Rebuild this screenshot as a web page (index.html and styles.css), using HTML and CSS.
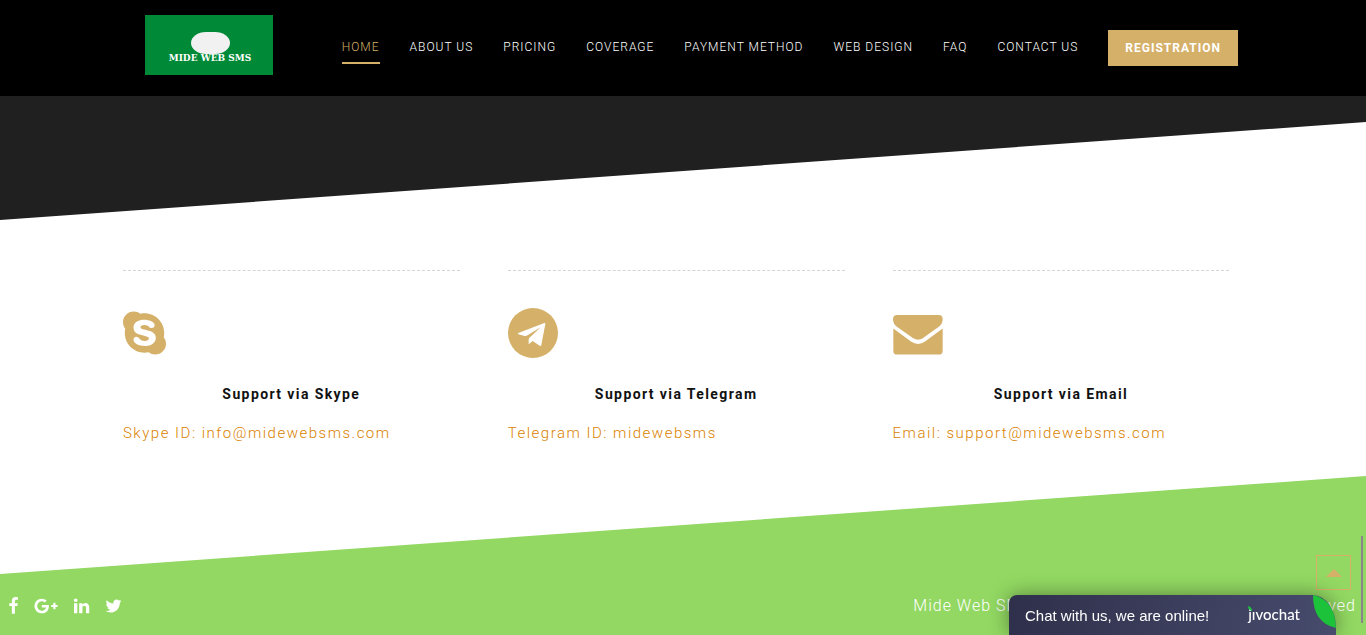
FILE: index.html
```html
<!DOCTYPE html>
<html lang="en">
<head>
<meta charset="utf-8">
<meta name="viewport" content="width=device-width, initial-scale=1">
<title>Mide Web SMS</title>
<link rel="stylesheet" href="styles.css">
</head>
<body>
<header class="header">
  <div class="header-inner">
    <a class="logo" href="#" aria-label="Mide Web SMS home">
      <span class="logo-mark"></span>
      <span class="logo-text">MIDE WEB SMS</span>
    </a>
    <nav class="nav">
      <a class="nav-link active" href="#">HOME</a>
      <a class="nav-link" href="#">ABOUT US</a>
      <a class="nav-link" href="#">PRICING</a>
      <a class="nav-link" href="#">COVERAGE</a>
      <a class="nav-link" href="#">PAYMENT METHOD</a>
      <a class="nav-link" href="#">WEB DESIGN</a>
      <a class="nav-link" href="#">FAQ</a>
      <a class="nav-link" href="#">CONTACT US</a>
      <a class="register" href="#">REGISTRATION</a>
    </nav>
  </div>
</header>
<main>
  <div class="slant-dark"></div>
  <section class="support">
    <article class="card">
      <div class="card-icon">
        <svg width="43" height="50" viewBox="0 0 448 512" aria-hidden="true"><path d="M424.700 299.800c2.900-14 4.700-28.900 4.700-43.800 0-113.500-91.900-205.300-205.300-205.300-14.900 0-29.700 1.700-43.800 4.700C161.300 40.700 137.700 32 112 32 50.200 32 0 82.200 0 144c0 25.700 8.700 49.300 23.300 68.200-2.900 14-4.700 28.900-4.700 43.800 0 113.500 91.900 205.300 205.300 205.300 14.900 0 29.700-1.700 43.800-4.700 19 14.600 42.600 23.300 68.200 23.300 61.800 0 112-50.200 112-112 .1-25.600-8.600-49.200-23.200-68.100zm-194.600 91.500c-65.600 0-120.500-29.200-120.500-65 0-16 9-30.600 29.500-30.600 31.200 0 34.100 44.900 88.100 44.900 25.700 0 42.300-11.400 42.300-26.300 0-18.700-16-21.600-42-28-62.500-15.400-117.800-22-117.800-87.200 0-59.200 58.600-81.100 109.100-81.100 55.100 0 110.800 21.900 110.800 55.400 0 16.900-11.400 31.800-30.300 31.800-28.300 0-29.200-33.500-75-33.500-25.700 0-42 7-42 22.500 0 19.800 20.800 21.800 69.100 33 41.400 9.300 90.700 26.800 90.700 77.600 0 59.100-57.100 86.500-112 86.500z"/></svg>
      </div>
      <h4 class="card-title">Support via Skype</h4>
      <p class="card-text">Skype ID: info@midewebsms.com</p>
    </article>
    <article class="card">
      <div class="card-icon">
        <svg width="50" height="50" viewBox="0 0 150 150" aria-hidden="true"><circle cx="75" cy="75" r="75"/><path class="cut" d="M109 45L31 75Q28 77 31 79L50 84Q53 85 56 83L98 58L66 88Q62 91 62 95V109L74 99L95 113Q99 115 100 111L112 48Q112 44 109 45Z"/></svg>
      </div>
      <h4 class="card-title">Support via Telegram</h4>
      <p class="card-text">Telegram ID: midewebsms</p>
    </article>
    <article class="card">
      <div class="card-icon">
        <svg width="50" height="50" viewBox="0 0 153 150" aria-hidden="true"><path d="M13 20H140Q152 20 152 33Q152 47 140 56L91 91Q77 100 62 91L12 56Q0 47 0 33Q0 20 13 20ZM1 61L55 101Q77 116 98 101L152 61V129Q152 141 140 141H13Q1 141 1 129Z"/></svg>
      </div>
      <h4 class="card-title">Support via Email</h4>
      <p class="card-text">Email: support@midewebsms.com</p>
    </article>
  </section>
</main>
<footer class="footer">
  <div class="social">
    <a href="#" aria-label="Facebook"><svg width="11" height="18" viewBox="350 0 1100 1792"><path d="M1343 12v264h-157q-86 0-116 36t-30 108v189h293l-39 296h-254v759h-306v-759h-255v-296h255v-218q0-186 104-288.500t277-102.500q147 0 228 12z"/></svg></a>
    <a href="#" aria-label="Google Plus"><svg width="24" height="18" viewBox="0 0 2304 1792"><path d="M1437 913q0 208-87 370.500t-248 254-369 91.500q-149 0-285-58t-234-156-156-234-58-285 58-285 156-234 234-156 285-58q286 0 491 192l-199 191q-117-113-292-113-123 0-227.500 62t-165.500 168.500-61 232.500 61 232.500 165.500 168.500 227.500 62q83 0 152.500-23t114.500-57.500 78.500-78.500 49-83 21.500-74h-416v-252h692q12 63 12 122zm867-122v210h-209v209h-210v-209h-209v-210h209v-209h210v209h209z"/></svg></a>
    <a href="#" aria-label="LinkedIn"><svg width="17" height="18" viewBox="60 0 1664 1792"><path d="M477 625v991h-330v-991h330zm21-306q1 73-50.500 122t-135.500 49h-2q-82 0-132-49t-50-122q0-74 51.500-122.500t134.500-48.500 133 48.500 51 122.500zm1166 729v568h-329v-530q0-105-40.500-164.500t-126.500-59.500q-63 0-105.500 34.500t-63.500 85.500q-11 30-11 81v553h-329q2-399 2-647t-1-296l-1-48h329v144h-2q20-32 41-56t56.500-52 87-43.500 114.500-15.500q171 0 275 113.500t104 332.500z"/></svg></a>
    <a href="#" aria-label="Twitter"><svg width="17" height="18" viewBox="64 0 1664 1792"><path d="M1684 408q-67 98-162 167 1 14 1 42 0 130-38 259.500t-115.500 248.500-184.500 210.500-258 146-323 54.500q-271 0-496-145 35 4 78 4 225 0 401-138-105-2-188-64.500t-114-159.500q33 5 61 5 43 0 85-11-112-23-185.500-111.500t-73.500-205.500v-4q68 38 146 41-66-44-105-115t-39-154q0-88 44-163 121 149 294.500 238.500t371.500 99.500q-8-38-8-74 0-134 94.500-228.500t228.500-94.500q140 0 236 102 109-21 205-78-37 115-142 178 93-10 186-50z"/></svg></a>
  </div>
  <p class="copyright">Mide Web SMS - Copyright © 2019 - All Rights Reserved</p>
</footer>
<a class="to-top" href="#" aria-label="Back to top"></a>
<div class="scroll-thumb"></div>
<button class="chat" type="button">
  <span>Chat with us, we are online!</span>
  <span class="chat-brand">jıvochat<svg class="brand-leaf" width="4" height="5" viewBox="0 0 4 5"><path d="M0 0Q4 1 4 5Q0 4 0 0Z"/></svg></span>
  <svg class="chat-leaf" width="23" height="33" viewBox="0 0 23 33" aria-hidden="true"><path d="M0 0Q22 5 23 33Q0 28 0 0Z"/></svg>
</button>
</body>
</html>
```
FILE: styles.css
```css
* { box-sizing: border-box; }
body {
  margin: 0;
  min-height: 100vh;
  display: flex;
  flex-direction: column;
  background: #fff;
  font-family: Roboto, "Liberation Sans", sans-serif;
  letter-spacing: 1px;
  overflow-x: hidden;
}
a { color: inherit; text-decoration: none; }

.header { background: #000; }
.header-inner {
  max-width: 1110px;
  height: 96px;
  margin: 0 auto;
  padding: 15px 0 0 17px;
  display: flex;
  justify-content: space-between;
  align-items: flex-start;
}
.logo {
  width: 128px;
  height: 60px;
  padding: 17px 0 0 2px;
  display: flex;
  flex-direction: column;
  align-items: center;
  background: #008a37;
}
.logo-mark {
  width: 39px;
  height: 22px;
  flex: none;
  border-radius: 15px / 11px;
  background: #f1f1f1;
}
.logo-text {
  color: #fff;
  font: bold 9px/8px "DejaVu Serif", serif;
  letter-spacing: 0;
  white-space: nowrap;
}
.nav {
  padding-top: 15px;
  display: flex;
  gap: 30px;
  color: #fff;
  font-size: 12px;
  font-weight: 300;
  line-height: 34px;
  white-space: nowrap;
}
.nav-link { height: 34px; }
.active { color: #d5b069; border-bottom: 2px solid #d5b069; }
.register {
  height: 36px;
  padding: 0 17px;
  line-height: 36px;
  font-weight: 700;
  background: #d5b069;
}

.slant-dark {
  height: 124px;
  background: #202020;
  clip-path: polygon(0 0, 100% 0, 100% 26px, 0 100%);
}
.support {
  padding: 50px 10vw 30px 9vw;
  display: grid;
  grid-template-columns: repeat(3, 1fr);
  gap: 48px;
}
.card { border-top: 1px dashed #d4d4d4; padding-top: 37px; }
.card-icon { height: 50px; }
.card-icon svg { display: block; fill: #d5b069; }
.card-icon .cut { fill: #fff; }
.card-title,
.card-text { letter-spacing: 0.1em; }
.card-title {
  margin: 24px 0 0;
  color: #111;
  font-size: 14px;
  font-weight: 700;
  line-height: 24px;
  text-align: center;
}
.card-text {
  margin: 14px 0 0;
  color: #d98200;
  font-size: 15px;
  font-weight: 300;
  line-height: 26px;
}

.footer {
  flex: 1 0 auto;
  padding: 116px 10px 16px 8px;
  display: flex;
  justify-content: space-between;
  align-items: flex-start;
  background: #92d862;
  clip-path: polygon(0 98px, 100% 0, 100% 100%, 0 100%);
}
.social { display: flex; gap: 15px; padding-top: 5px; }
.social svg { display: block; fill: #fff; }
.copyright {
  margin: 0;
  color: #fff;
  font-size: 16px;
  font-weight: 300;
  line-height: 27px;
}

.to-top {
  position: fixed;
  right: 15px;
  bottom: 45px;
  width: 35px;
  height: 35px;
  display: grid;
  place-items: center;
  border: 1px solid #d5b069;
}
.to-top::before {
  content: "";
  border: 8px solid transparent;
  border-top-width: 0;
  border-bottom-color: #d5b069;
}
.scroll-thumb {
  position: fixed;
  right: 3px;
  bottom: 12px;
  width: 2px;
  height: 87px;
  background: #8a858a;
}
.chat {
  position: fixed;
  right: 30px;
  bottom: 0;
  width: 327px;
  height: 40px;
  padding: 2px 36px 0 16px;
  display: flex;
  justify-content: space-between;
  align-items: center;
  border: 0;
  border-radius: 8px 23px 0 0 / 8px 33px 0 0;
  background: linear-gradient(95deg, #2f304b, #474b6c);
  box-shadow: 0 0 20px rgba(0, 0, 0, 0.4);
  color: #fff;
  font: 15px/20px "Liberation Sans", sans-serif;
}
.chat-brand {
  position: relative;
  padding-bottom: 4px;
  font-family: Lato, sans-serif;
  font-weight: 500;
}
.brand-leaf { position: absolute; left: 0; top: 2px; fill: #1dc23b; }
.chat-leaf { position: absolute; right: 0; top: 0; fill: #1dc23b; }
```
